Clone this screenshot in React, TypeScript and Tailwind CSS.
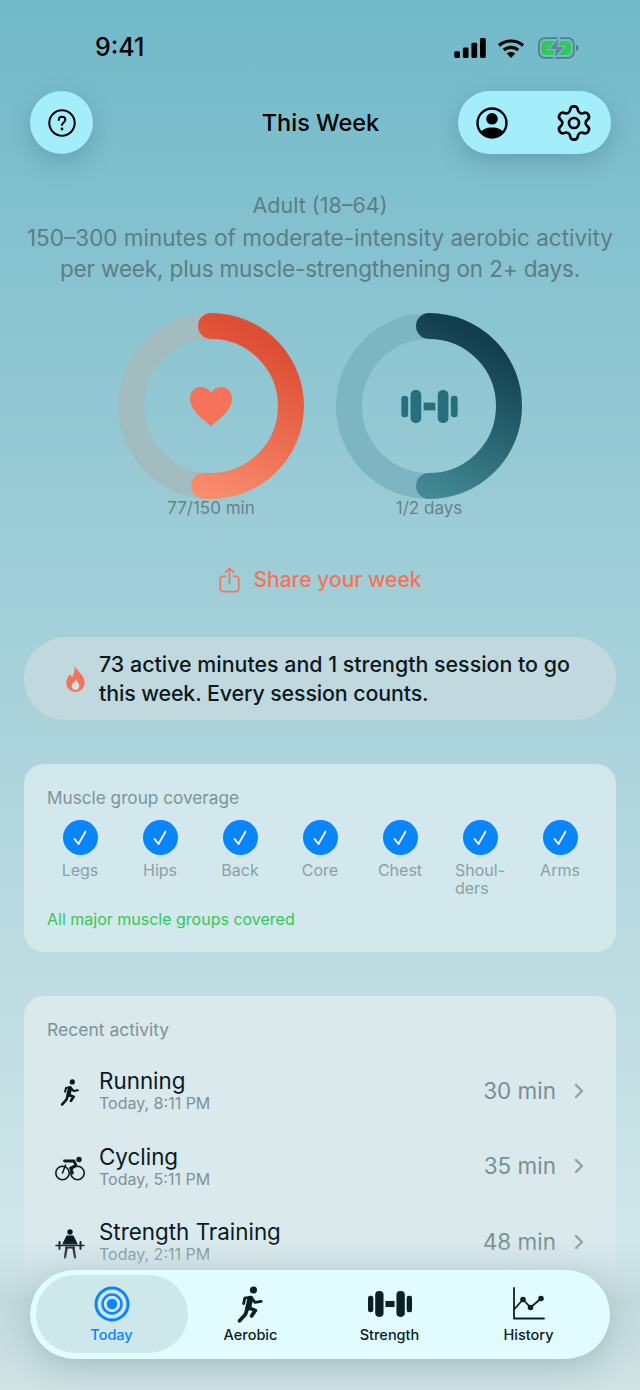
import { ChevronRight, Settings } from "lucide-react";

const muscles = [["Legs"], ["Hips"], ["Back"], ["Core"], ["Chest"], ["Shoul-", "ders"], ["Arms"]];

function RunIcon({ className }: { className?: string }) {
  return (
    <svg viewBox="4 0 18 24" fill="none" stroke="currentColor" strokeLinecap="round" strokeLinejoin="round" className={className}>
      <circle cx="14.6" cy="2.6" r="2.3" fill="currentColor" stroke="none" />
      <path d="M12.6 8.2 11.2 14" strokeWidth="3.8" />
      <path d="M13 7.4 15.6 10.6 19.6 10" strokeWidth="1.8" />
      <path d="M12.4 7.4 9 7.9 8.2 11.4" strokeWidth="1.8" />
      <path d="M11 14 15.8 15.8 13.4 19.4" strokeWidth="2.4" />
      <path d="M10.8 14 9.4 18.4 5.6 22.6" strokeWidth="2.4" />
    </svg>
  );
}

function BikeIcon({ className }: { className?: string }) {
  return (
    <svg viewBox="0 0 30 25" fill="none" stroke="currentColor" strokeLinecap="round" strokeLinejoin="round" className={className}>
      <circle cx="7.500" cy="17" r="6.700" strokeWidth="1.600" />
      <circle cx="22.500" cy="17" r="6.700" strokeWidth="1.600" />
      <circle cx="24" cy="3.500" r="2.700" fill="currentColor" stroke="none" />
      <path d="M9.500 5H19L21 9.500 15.500 12 17.500 17" strokeWidth="2.800" />
      <path d="M7.500 17 10.500 9" strokeWidth="1.500" />
    </svg>
  );
}

function LiftIcon({ className }: { className?: string }) {
  return (
    <svg viewBox="0 0 30 30" fill="none" stroke="currentColor" strokeLinecap="round" strokeLinejoin="round" className={className}>
      <circle cx="15" cy="3" r="2.700" fill="currentColor" stroke="none" />
      <path d="M12 7H18L22 15H8Z" fill="currentColor" strokeWidth="1.200" />
      <path d="M1 16.400H29" strokeWidth="1.500" />
      <path d="M4.500 13V20M25.500 13V20" strokeWidth="2" />
      <path d="M11 18.500H19" strokeWidth="1.800" />
      <path d="M11.500 19 10 28.400M18.500 19 20 28.400" strokeWidth="2.400" />
    </svg>
  );
}

function Dumbbell({ className }: { className?: string }) {
  return (
    <svg viewBox="0 0 58 34" fill="currentColor" className={className}>
      <rect x="0" y="6" width="7" height="22" rx="3" />
      <rect x="9.5" y="0" width="11" height="34" rx="5" />
      <rect x="23" y="13" width="12" height="8" />
      <rect x="37.500" y="0" width="11" height="34" rx="5" />
      <rect x="51" y="6" width="7" height="22" rx="3" />
    </svg>
  );
}

function Ring({ id, track, from, to, d, label, children }: { id: string; track: string; from: string; to: string; d: string; label: string; children: React.ReactNode }) {
  return (
    <div className="flex w-[186px] flex-col items-center">
      <div className="relative h-[186px] w-[186px]">
        <svg viewBox="0 0 186 186" className="h-full w-full" fill="none">
          <defs>
            <linearGradient id={id} x1="150" y1="30" x2="70" y2="186" gradientUnits="userSpaceOnUse">
              <stop offset="0" stopColor={from} />
              <stop offset="1" stopColor={to} />
            </linearGradient>
          </defs>
          <circle cx="93" cy="93" r="80" stroke={track} strokeWidth="26" />
          <path d={d} stroke={`url(#${id})`} strokeWidth="26" strokeLinecap="round" />
        </svg>
        <div className="absolute inset-0 flex items-center justify-center">{children}</div>
      </div>
      <div className="-mt-[1px] h-[20px] text-[17px] leading-[20px] text-[#678389]">{label}</div>
    </div>
  );
}

function ActivityRow({ icon, name, time, value }: { icon: React.ReactNode; name: string; time: string; value: string }) {
  return (
    <div className="flex h-[75.5px] items-center">
      <div className="flex w-[58px] justify-center pt-[4px]">{icon}</div>
      <div className="flex flex-1 flex-col">
        <div className="-mt-[1px] text-[22.4px] leading-[27px] text-[#0c1a1f]">{name}</div>
        <div className="-mt-[1px] text-[16px] leading-[20px] text-[#7e9297]">{time}</div>
      </div>
      <div className="text-[22.5px] text-[#7b8f94]">{value}</div>
      <ChevronRight className="ml-[11px] mr-[8px] h-[24px] w-[24px] text-[#8fa2a7]" strokeWidth={2.4} />
    </div>
  );
}

function TabItem({ label, active, children }: { label: string; active?: boolean; children: React.ReactNode }) {
  return (
    <div className={`relative flex flex-col items-center ${active ? "text-[#0a84ff]" : "text-[#0b2026]"}`}>
      {active && <div className="absolute left-[-6px] top-[5px] h-[78px] w-[152px] rounded-[39px] bg-[#cde7ea]" />}
      <div className="relative flex h-[54px] items-center pt-[14px]">{children}</div>
      <div className="relative mt-[1px] text-[14.5px] font-medium leading-[20px]">{label}</div>
    </div>
  );
}

export default function App() {
  return (
    <div className="relative h-[1390px] w-[640px] overflow-hidden bg-gradient-to-b from-[#71b9c9] to-[#dcebec] [font-family:Inter,sans-serif]">
      {/* status bar */}
      <div className="flex h-[91px] items-start justify-between pl-[95px] pr-[59px] pt-[31px]">
        <div className="text-[25px] font-medium leading-[32px] text-black">9:41</div>
        <div className="flex items-center gap-[11px] pt-[5px]">
          <svg viewBox="0 0 33 22" className="h-[21px] w-[32px]" fill="black">
            <rect x="0" y="14" width="6" height="7" rx="1.500" />
            <rect x="9" y="10" width="6" height="11" rx="1.500" />
            <rect x="18" y="5" width="6" height="16" rx="1.500" />
            <rect x="27" y="0" width="6" height="21" rx="1.500" />
          </svg>
          <svg viewBox="0 0 28 22" className="h-[22px] w-[28px]" fill="none" stroke="black" strokeWidth="3.2">
            <path d="M2 8.500C8.500 2.500 19.500 2.500 26 8.500" />
            <path d="M6.800 13C10.800 9.500 17.200 9.500 21.200 13" />
            <path d="M14 21 9.800 16.600C12 14.400 16 14.400 18.200 16.600Z" fill="black" stroke="none" />
          </svg>
          <svg viewBox="0 0 38 22" className="h-[24px] w-[45px]">
            <rect x="1" y="2" width="32" height="18" rx="5" fill="none" stroke="#4f7f88" strokeWidth="1.6" />
            <rect x="3.500" y="4.500" width="27" height="13" rx="3" fill="#34c759" />
            <path d="M35 8v6c1.500-.5 2.500-1.500 2.500-3S36.500 8.500 35 8Z" fill="#4f7f88" />
            <path d="M20 0.500 9.500 12.500H16L14.500 21.500 25 9.500H18.500Z" fill="#5b8a92" stroke="#71b9c9" strokeWidth="1.200" />
          </svg>
        </div>
      </div>

      {/* header */}
      <div className="grid h-[63px] grid-cols-[153px_1fr_153px] items-center pl-[30px] pr-[29px] text-black">
        <div className="flex h-[63px] w-[63px] items-center justify-center rounded-full bg-[#a4eefb] shadow-[0_8px_24px_rgba(40,90,105,0.28)]">
          <svg viewBox="0 0 28 28" className="h-[28px] w-[28px]" fill="none" stroke="black" strokeWidth="2">
            <circle cx="14" cy="14" r="12.700" />
            <path d="M10.800 11c0-2 1.400-3.200 3.300-3.200s3.200 1.200 3.200 2.900c0 2.700-3.300 2.700-3.300 5.300" strokeWidth="2" strokeLinecap="round" />
            <circle cx="14" cy="20" r="1.400" fill="black" stroke="none" />
          </svg>
        </div>
        <div className="text-center text-[23.5px] font-medium">This Week</div>
        <div className="flex h-[63px] items-center justify-between rounded-[32px] bg-[#a4eefb] pl-[18px] pr-[17px] shadow-[0_8px_24px_rgba(40,90,105,0.28)]">
          <svg viewBox="0 0 32 32" className="h-[32px] w-[32px]">
            <defs>
              <clipPath id="avatar">
                <circle cx="16" cy="16" r="14.500" />
              </clipPath>
            </defs>
            <circle cx="16" cy="11.800" r="5.800" fill="black" />
            <path d="M3 32C3 23 9 20.500 16 20.500S29 23 29 32Z" fill="black" clipPath="url(#avatar)" />
            <circle cx="16" cy="16" r="14.500" fill="none" stroke="black" strokeWidth="2.400" />
          </svg>
          <Settings className="h-[40px] w-[40px]" strokeWidth={1.6} />
        </div>
      </div>

      {/* guideline */}
      <div className="mt-[36px] flex flex-col items-center text-center text-[#5e7d84]">
        <div className="text-[21.5px] leading-[30px]">Adult (18–64)</div>
        <div className="mt-[2px] text-[22.5px] leading-[31px]">
          150–300 minutes of moderate-intensity aerobic activity
          <div className="tracking-[-0.15px]">per week, plus muscle-strengthening on 2+ days.</div>
        </div>
      </div>

      {/* rings */}
      <div className="mt-[29px] flex justify-center gap-[32px]">
        <Ring id="cardio" track="#a2bcc0" from="#de4e34" to="#fb9272" d="M93 13A80 80 0 1 1 86 172.700" label="77/150 min">
          <svg viewBox="0 0 42 39" className="mt-[1px] h-[39px] w-[42px]" fill="#f4735a">
            <path d="M21 39C17 35 0 25 0 11.500 0 4.500 5 0 10.800 0 15 0 19 2.200 21 6 23 2.200 27 0 31.200 0 37 0 42 4.500 42 11.500 42 25 25 35 21 39Z" />
          </svg>
        </Ring>
        <Ring id="strength" track="#7db6c2" from="#123f50" to="#469199" d="M93 13A80 80 0 0 1 93 173" label="1/2 days">
          <Dumbbell className="h-[33px] w-[57px] text-[#26707c]" />
        </Ring>
      </div>

      {/* share */}
      <div className="mt-[47px] flex h-[30px] items-center justify-center gap-[14px] text-[#f4735a]">
        <svg viewBox="0 0 22 28" className="h-[26px] w-[21px]" fill="none" stroke="currentColor" strokeWidth="1.700" strokeLinecap="round" strokeLinejoin="round">
          <path d="M6.500 10H4a3 3 0 0 0-3 3v10.500a3 3 0 0 0 3 3h14a3 3 0 0 0 3-3V13a3 3 0 0 0-3-3h-2.500" />
          <path d="M11 18V1.500M6.800 5.500 11 1.300l4.200 4.200" />
        </svg>
        <div className="text-[21px] font-medium">Share your week</div>
      </div>

      {/* banner */}
      <div className="mx-[24px] mt-[42px] flex h-[83px] items-center rounded-[42px] bg-[#c1d9de] pl-[41px]">
        <svg viewBox="0 0 20 28" className="h-[27px] w-[21px]">
          <path d="M9 0C10 6 19.500 9 19.500 18.500 19.500 24 15 28 10 28S.5 24 .5 18.500C.5 14 3 11.500 4.500 9.500L6.500 13C8.500 9.500 9.800 5 9 0Z" fill="#f4735a" />
          <path d="M10.500 14.500C11 17 14 18.500 14 22 14 24.500 12 26 10 26S6 24.500 6 22C6 19 9.500 18 10.500 14.500Z" fill="#d5e3e5" />
        </svg>
        <div className="ml-[13px] text-[21.4px] font-medium leading-[29px] text-[#0c1a1f]">
          73 active minutes and 1 strength session to go
          <div className="tracking-[-0.12px]">this week. Every session counts.</div>
        </div>
      </div>

      {/* muscle coverage */}
      <div className="mx-[24px] mt-[44px] h-[188px] rounded-[20px] bg-[#d2e8ec] px-[16px] pt-[23px]">
        <div className="pl-[7px] text-[17.2px] leading-[22px] text-[#7d9399]">Muscle group coverage</div>
        <div className="mt-[11px] grid h-[88px] grid-cols-7">
          {muscles.map((lines) => (
            <div key={lines[0]} className="flex flex-col items-center">
              <div className="flex h-[35px] w-[35px] items-center justify-center rounded-full bg-[#0a84ff]">
                <svg viewBox="0 0 18 18" className="h-[18px] w-[18px]" fill="none" stroke="white" strokeWidth="1.800" strokeLinecap="round" strokeLinejoin="round">
                  <path d="M3.500 10 7.500 15 14.500 2.500" />
                </svg>
              </div>
              <div className="mt-[6px] text-left text-[16px] leading-[18px] text-[#8ba0a6]">
                {lines.map((line) => (
                  <div key={line}>{line}</div>
                ))}
              </div>
            </div>
          ))}
        </div>
        <div className="pl-[7px] text-[16px] leading-[22px] text-[#34c759]">All major muscle groups covered</div>
      </div>

      {/* recent activity */}
      <div className="mx-[24px] mt-[44px] h-[400px] rounded-[20px] bg-[#d9e9ec] px-[17px] pt-[23px]">
        <div className="pl-[6px] text-[17.5px] leading-[22px] text-[#7d9399]">Recent activity</div>
        <div className="mt-[12px]">
          <ActivityRow icon={<RunIcon className="h-[27px] w-[21px] text-[#0c1a1f]" />} name="Running" time="Today, 8:11 PM" value="30 min" />
          <ActivityRow icon={<BikeIcon className="h-[25px] w-[30px] text-[#0c1a1f]" />} name="Cycling" time="Today, 5:11 PM" value="35 min" />
          <ActivityRow icon={<LiftIcon className="h-[30px] w-[30px] text-[#0c1a1f]" />} name="Strength Training" time="Today, 2:11 PM" value="48 min" />
        </div>
      </div>

      {/* fade under the tab bar */}
      <div className="absolute inset-x-0 bottom-0 h-[150px] bg-gradient-to-b from-[#c3d9dc00] via-[#c3d9dc] via-[40%] to-[#cfe2e4]" />

      {/* tab bar */}
      <div className="absolute left-[30px] top-[1270px] grid h-[89px] w-[580px] grid-cols-4 rounded-[45px] bg-[#e2fbff] px-[12px] shadow-[0_10px_30px_rgba(50,90,100,0.22)]">
        <TabItem label="Today" active>
          <svg viewBox="0 0 36 36" className="h-[36px] w-[36px]" fill="none" stroke="currentColor">
            <circle cx="18" cy="18" r="16" strokeWidth="3" />
            <circle cx="18" cy="18" r="9.500" strokeWidth="2.400" />
            <circle cx="18" cy="18" r="5.200" fill="currentColor" stroke="none" />
          </svg>
        </TabItem>
        <TabItem label="Aerobic">
          <RunIcon className="h-[37px] w-[28px]" />
        </TabItem>
        <TabItem label="Strength">
          <Dumbbell className="h-[26px] w-[44px]" />
        </TabItem>
        <TabItem label="History">
          <svg viewBox="0 0 34 34" className="h-[34px] w-[34px]" fill="none" stroke="currentColor" strokeWidth="1.800" strokeLinecap="round" strokeLinejoin="round">
            <path d="M2 1V31.500H32" />
            <path d="M2 22.500 11 12.500 18.500 20.500 29 11.500" />
            <circle cx="11" cy="12.500" r="2.800" fill="currentColor" stroke="none" />
            <circle cx="18.500" cy="20.500" r="2.800" fill="currentColor" stroke="none" />
            <circle cx="29" cy="11.500" r="2.800" fill="currentColor" stroke="none" />
          </svg>
        </TabItem>
      </div>
    </div>
  );
}
